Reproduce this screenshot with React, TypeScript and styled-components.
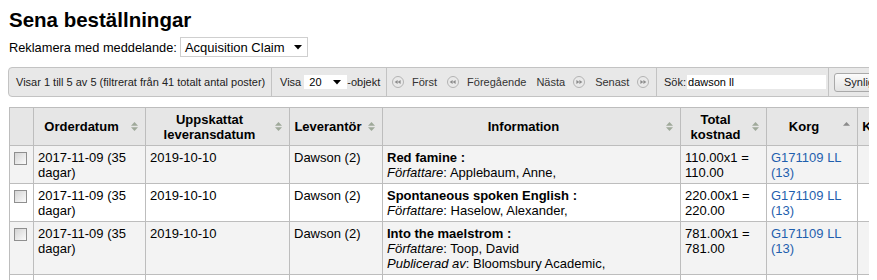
import styled, { createGlobalStyle } from "styled-components"

const GlobalStyle = createGlobalStyle`
    html, body {
        overflow: hidden;
    }
    body {
        margin: 8px;
        background: #ffffff;
        color: #000000;
        font-family: "Liberation Sans", Arial, sans-serif;
    }
`

type InfoLine = { label: string; value: string }

type Order = {
    ordered: string
    expected: string
    vendor: string
    title: string
    lines: InfoLine[]
    cost: string
    basket: string
}

const orders: Order[] = [
    {
        ordered: "2017-11-09 (35 dagar)",
        expected: "2019-10-10",
        vendor: "Dawson (2)",
        title: "Red famine :",
        lines: [{ label: "Författare", value: "Applebaum, Anne," }],
        cost: "110.00x1 = 110.00",
        basket: "G171109 LL (13)",
    },
    {
        ordered: "2017-11-09 (35 dagar)",
        expected: "2019-10-10",
        vendor: "Dawson (2)",
        title: "Spontaneous spoken English :",
        lines: [{ label: "Författare", value: "Haselow, Alexander," }],
        cost: "220.00x1 = 220.00",
        basket: "G171109 LL (13)",
    },
    {
        ordered: "2017-11-09 (35 dagar)",
        expected: "2019-10-10",
        vendor: "Dawson (2)",
        title: "Into the maelstrom :",
        lines: [
            { label: "Författare", value: "Toop, David" },
            { label: "Publicerad av", value: "Bloomsbury Academic," },
        ],
        cost: "781.00x1 = 781.00",
        basket: "G171109 LL (13)",
    },
    {
        ordered: "2017-11-09 (35 dagar)",
        expected: "2019-10-10",
        vendor: "Dawson (2)",
        title: "The Nordic model :",
        lines: [{ label: "Författare", value: "Andersen, Torben M.," }],
        cost: "95.00x1 = 95.00",
        basket: "G171109 LL (13)",
    },
    {
        ordered: "2017-11-09 (35 dagar)",
        expected: "2019-10-10",
        vendor: "Dawson (2)",
        title: "Sound unbound :",
        lines: [{ label: "Författare", value: "Miller, Paul D.," }],
        cost: "150.00x1 = 150.00",
        basket: "G171109 LL (13)",
    },
]

// kolumner: bredd i px, sorteringsikon
const columns = [
    { label: "", width: 24, sort: "none" },
    { label: "Orderdatum", width: 112, sort: "both" },
    { label: "Uppskattat leveransdatum", width: 144, sort: "both" },
    { label: "Leverantör", width: 93, sort: "both" },
    { label: "Information", width: 298, sort: "both" },
    { label: "Total kostnad", width: 86, sort: "both" },
    { label: "Korg", width: 91, sort: "asc" },
    { label: "Kommentarer", width: 110, sort: "both" },
]

const Caret = () => (
    <svg width="8" height="5" viewBox="0 0 8 5">
        <polygon points="0,0 8,0 4,4.5" fill="#000" />
    </svg>
)

const SortIcon = ({ kind }: { kind: string }) => (
    <SortMark width="7" height="9" viewBox="0 0 7 9">
        <polygon points="0,3.8 3.5,0 7,3.8" fill={kind === "asc" ? "#8a8a8a" : "#9fa99a"} />
        {kind === "both" && <polygon points="0,5.2 3.5,9 7,5.2" fill="#9fa99a" />}
    </SortMark>
)

const PagerIcon = ({ dir }: { dir: "left" | "right" }) => (
    <svg width="12" height="12" viewBox="0 0 12 12">
        <circle cx="6" cy="6" r="5.5" fill="#e9e9e9" stroke="#b3b3b3" />
        {dir === "left" ? (
            <>
                <polygon points="2.6,6 5.6,3.9 5.6,8.1" fill="#8c8c8c" />
                <polygon points="5.6,6 8.6,3.9 8.6,8.1" fill="#8c8c8c" />
            </>
        ) : (
            <>
                <polygon points="3.4,3.9 6.4,6 3.4,8.1" fill="#8c8c8c" />
                <polygon points="6.4,3.9 9.4,6 6.4,8.1" fill="#8c8c8c" />
            </>
        )}
    </svg>
)

const App = () => {
    return (
        <>
            <GlobalStyle />
            <Title>Sena beställningar</Title>

            <ClaimRow>
                Reklamera med meddelande:
                <SelectBox $w={128} $h={20} $size={13}>
                    Acquisition Claim
                    <Caret />
                </SelectBox>
            </ClaimRow>

            <Toolbar>
                <Section $w={262} $pl={7}>
                    Visar 1 till 5 av 5 (filtrerat från 41 totalt antal poster)
                </Section>
                <Section $w={115} $pl={8}>
                    Visa&nbsp;
                    <SelectBox $w={43} $h={14} $size={11}>
                        20
                        <Caret />
                    </SelectBox>
                    -objekt
                </Section>
                <Section $w={270} $pl={0}>
                    <PageButton>
                        <PagerIcon dir="left" />
                        Först
                    </PageButton>
                    <PageButton>
                        <PagerIcon dir="left" />
                        Föregående
                    </PageButton>
                    <PageButton>
                        Nästa
                        <PagerIcon dir="right" />
                    </PageButton>
                    <PageButton>
                        Senast
                        <PagerIcon dir="right" />
                    </PageButton>
                </Section>
                <Section $w={172} $pl={7}>
                    Sök:
                    <SearchInput defaultValue="dawson ll" />
                </Section>
                <Section $w={140} $pl={5}>
                    <ColumnsButton>Synliga kolumner</ColumnsButton>
                </Section>
            </Toolbar>

            <Table>
                <colgroup>
                    {columns.map((c, i) => <Col key={i} $w={c.width} />)}
                </colgroup>
                <thead>
                    <tr>
                        {columns.map((c, i) => (
                            <Th key={i} $sortable={c.sort !== "none"}>
                                {c.label}
                                {c.sort !== "none" && <SortIcon kind={c.sort} />}
                            </Th>
                        ))}
                    </tr>
                </thead>
                <tbody>
                    {orders.map((o, i) => (
                        <Row key={i} $odd={i % 2 === 0}>
                            <Td><CheckBox type="checkbox" /></Td>
                            <Td>{o.ordered}</Td>
                            <Td>{o.expected}</Td>
                            <Td>{o.vendor}</Td>
                            <Td>
                                <BookTitle>{o.title}</BookTitle>
                                {o.lines.map((l) => (
                                    <div key={l.label}>
                                        <em>{l.label}</em>: {l.value}
                                    </div>
                                ))}
                            </Td>
                            <Td>{o.cost}</Td>
                            <Td><Link href="#">{o.basket}</Link></Td>
                            <Td></Td>
                        </Row>
                    ))}
                </tbody>
            </Table>
        </>
    )
}

const Title = styled.h1`
    margin: 0;
    padding-left: 1px;
    font-size: 20.5px;
    line-height: 24px;
    font-weight: 700;
`

const ClaimRow = styled.div`
    display: flex;
    align-items: center;
    gap: 3px;
    height: 20px;
    margin-top: 5px;
    padding-left: 1px;
    font-size: 12.8px;
`

const SelectBox = styled.span<{ $w: number; $h: number; $size: number }>`
    display: inline-flex;
    align-items: center;
    justify-content: space-between;
    box-sizing: border-box;
    width: ${p => p.$w}px;
    height: ${p => p.$h}px;
    padding: 0 5px 0 4px;
    background: #ffffff;
    border: 1px solid ${p => (p.$size > 12 ? "#cfcfcf" : "#ffffff")};
    font-size: ${p => p.$size}px;
    color: #000;
`

const Toolbar = styled.div`
    display: flex;
    width: max-content;
    height: 28px;
    margin-top: 10px;
    background: #e8e8e8;
    border: 1px solid #c3c3c3;
    border-radius: 4px 0 0 4px;
    font-size: 11px;
    color: #222;
`

const Section = styled.div<{ $w: number; $pl: number }>`
    display: flex;
    align-items: center;
    box-sizing: border-box;
    width: ${p => p.$w}px;
    padding-left: ${p => p.$pl}px;
    white-space: nowrap;
    border-left: 1px solid #c3c3c3;

    &:first-child {
        border-left: 0;
    }
`

const PageButton = styled.span`
    display: inline-flex;
    align-items: center;
    gap: 8px;
    padding: 0 5px;
    color: #333;
`

const SearchInput = styled.input`
    box-sizing: border-box;
    width: 139px;
    height: 14px;
    margin-left: 1px;
    padding: 0 1px;
    border: 0;
    outline: none;
    background: #ffffff;
    font-family: "Liberation Sans", Arial, sans-serif;
    font-size: 11px;
    color: #000;
`

const ColumnsButton = styled.button`
    height: 19px;
    padding: 0 9px;
    border: 1px solid #a9a9a9;
    border-radius: 3px;
    background: linear-gradient(#fbfbfb, #e3e3e3);
    font-family: "Liberation Sans", Arial, sans-serif;
    font-size: 11px;
    color: #222;
    white-space: nowrap;
`

const Table = styled.table`
    margin: 10px 0 0 1px;
    border-collapse: collapse;
    table-layout: fixed;
    width: 958px;
    font-size: 13px;
    line-height: 15px;
`

const Col = styled.col<{ $w: number }>`
    width: ${p => p.$w}px;
`

const Th = styled.th<{ $sortable: boolean }>`
    position: relative;
    padding: 3.5px ${p => (p.$sortable ? 20 : 5)}px 3.5px 4px;
    background: #e6e6e6;
    border: 1px solid #bdbdbd;
    font-weight: 700;
    text-align: center;
    vertical-align: middle;
`

const SortMark = styled.svg`
    position: absolute;
    right: 7px;
    top: 50%;
    margin-top: -4.5px;
`

const Row = styled.tr<{ $odd: boolean }>`
    background: ${p => (p.$odd ? "#f3f3f3" : "#ffffff")};
`

const Td = styled.td`
    padding: 3.5px 4px;
    border: 1px solid #bdbdbd;
    vertical-align: top;
`

const CheckBox = styled.input`
    appearance: none;
    display: block;
    width: 13px;
    height: 13px;
    margin: 2px 0 0 0;
    border: 1px solid #8f8f8f;
    background: linear-gradient(135deg, #d4d4d4, #fbfbfb);
`

const BookTitle = styled.div`
    font-weight: 700;
`

const Link = styled.a`
    color: #1f5fae;
    text-decoration: none;
`

export default App
